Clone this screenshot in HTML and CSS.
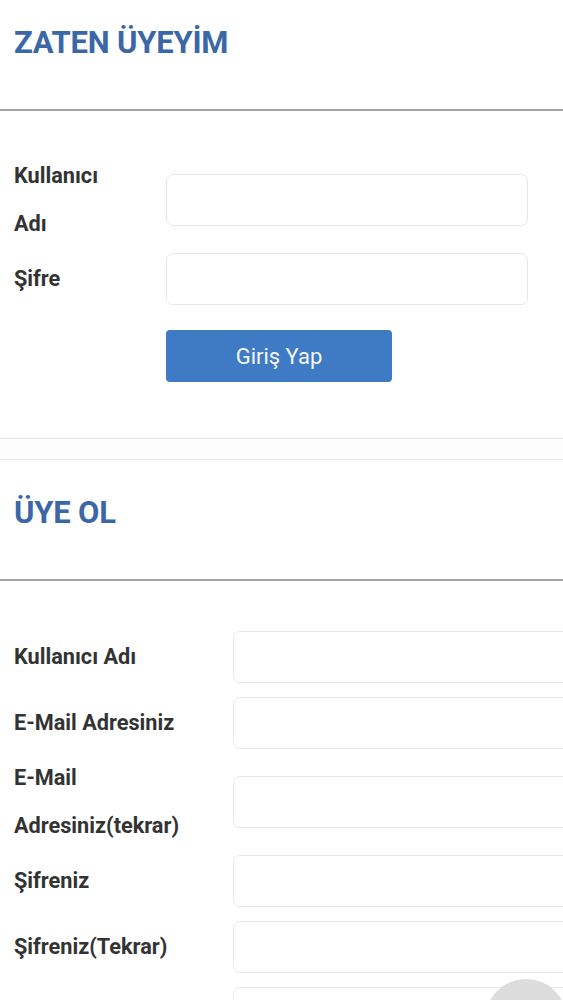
FILE: index.html
```html
<!DOCTYPE html>
<html lang="tr">
<head>
<meta charset="utf-8">
<title>Üyelik</title>
<link rel="stylesheet" href="styles.css">
</head>
<body>
<div class="page">
  <section class="panel panel-login">
    <div class="panel-head"><h2>ZATEN ÜYEYİM</h2></div>
    <form class="form form-login">
      <label class="lbl">Kullanıcı Adı</label>
      <div class="field"><input type="text"></div>
      <label class="lbl">Şifre</label>
      <div class="field"><input type="password"></div>
      <div></div>
      <div class="actions"><button type="button" class="btn">Giriş Yap</button></div>
    </form>
  </section>
  <section class="panel panel-register">
    <div class="panel-head"><h2>ÜYE OL</h2></div>
    <form class="form form-register">
      <label class="lbl">Kullanıcı Adı</label>
      <div class="field"><input type="text"></div>
      <label class="lbl">E-Mail Adresiniz</label>
      <div class="field"><input type="text"></div>
      <label class="lbl">E-Mail Adresiniz(tekrar)</label>
      <div class="field"><input type="text"></div>
      <label class="lbl">Şifreniz</label>
      <div class="field"><input type="password"></div>
      <label class="lbl">Şifreniz(Tekrar)</label>
      <div class="field"><input type="password"></div>
      <label class="lbl"></label>
      <div class="field"><input type="text"></div>
    </form>
  </section>
</div>
<div class="fab"></div>
</body>
</html>
```

FILE: styles.css
```css
html, body {
  margin: 0;
  padding: 0;
  background: #fff;
  overflow: hidden;
  font-family: Roboto, "Liberation Sans", sans-serif;
}
.page {
  margin-top: -10px;
  background: #fcfcfc;
}
.panel {
  background: #fff;
  overflow: hidden;
}
.panel-login {
  border-bottom: 1px solid #e6e6e6;
  margin-bottom: 20px;
}
.panel-register {
  border-top: 1px solid #e6e6e6;
}
.panel-head {
  padding: 35px 0 48px 14px;
  border-bottom: 2px solid #a4a4a4;
}
.panel-head h2 {
  margin: 0;
  font-size: 31px;
  line-height: 36px;
  font-weight: 700;
  color: #3b67a9;
  letter-spacing: -0.2px;
}
.form {
  display: grid;
  padding: 43px 0 56px 14px;
  align-items: center;
}
.form-login {
  grid-template-columns: 152px 362px;
}
.form-register {
  grid-template-columns: 219px 362px;
}
.lbl {
  margin: -2px 0;
  padding-right: 36px;
  font-size: 21.7px;
  line-height: 48px;
  font-weight: 700;
  color: #333;
}
.field {
  padding: 7px 0;
}
.field input {
  display: block;
  box-sizing: border-box;
  width: 100%;
  height: 52px;
  border: 1.5px solid #e8e8e8;
  border-radius: 7px;
  background: #fff;
  margin: 0;
}
.actions {
  padding-top: 18px;
}
.btn {
  display: block;
  width: 226px;
  height: 52px;
  border: 0;
  border-radius: 4px;
  background: #3f7ac5;
  color: #f4f7fc;
  font-family: Roboto, "Liberation Sans", sans-serif;
  font-size: 22px;
}
.fab {
  position: fixed;
  right: -4px;
  bottom: -61px;
  width: 82px;
  height: 82px;
  border-radius: 50%;
  background: #dcdcdc;
}
```
